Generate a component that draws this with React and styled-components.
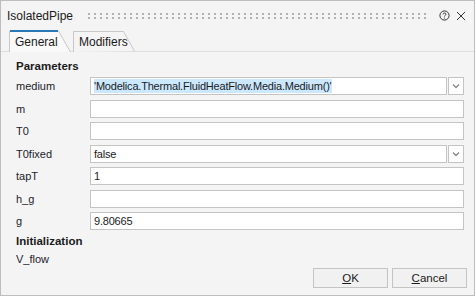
import React from 'react';
import styled, { createGlobalStyle } from 'styled-components';

const GlobalStyle = createGlobalStyle`
  html, body { margin: 0; padding: 0; background: #ffffff; }
  body { font-family: "Liberation Sans", Arial, sans-serif; font-size: 11px; color: #1b1b1b; }
`;

const Dialog = styled.div`
  box-sizing: border-box;
  width: 475px;
  height: 296px;
  border: 1px solid #bdbdbd;
  background: #f4f4f4;
  display: flex;
  flex-direction: column;
`;

const TitleBar = styled.div`
  height: 30px;
  display: flex;
  align-items: center;
  padding: 0 7px 0 6px;
  gap: 5px;
`;

const Title = styled.span`
  font-size: 12px;
  color: #1b1b1b;
`;

const Grip = styled.div`
  flex: 1;
  height: 6px;
  margin: 0 5px 0 10px;
  background-image: radial-gradient(circle, #b2b2b2 1px, transparent 1.3px);
  background-size: 6px 4px;
  background-position: -2px -1px;
`;

const IconBtn = styled.span`
  width: 12px;
  height: 12px;
  display: flex;
  align-items: center;
  justify-content: center;
`;

const TabBar = styled.div`
  display: flex;
  padding-left: 8px;
  height: 21px;
  border-bottom: 1px solid #dedede;
`;

const Tab = styled.div`
  position: relative;
  width: ${p => p.w}px;
  margin-right: 2px;
  padding-left: 6px;
  display: flex;
  align-items: center;
  font-size: 12px;
  color: #1b1b1b;
  padding-top: 2px;
  box-sizing: border-box;
  z-index: 0;
`;

const TabShape = styled.svg`
  position: absolute;
  left: 0;
  top: 0;
  z-index: -1;
`;

const Body = styled.div`
  flex: 1;
  display: flex;
  flex-direction: column;
  padding: 5px 10px 0 15px;
`;

const Heading = styled.div`
  font-weight: bold;
  font-size: 11.5px;
  height: 18px;
  display: flex;
  align-items: center;
  margin-top: ${p => p.mt || 0}px;
`;

const Grid = styled.div`
  display: grid;
  grid-template-columns: 74px 1fr;
  grid-auto-rows: 18px;
  row-gap: 4.5px;
  margin-top: 2px;
`;

const Label = styled.div`
  height: 18px;
  display: flex;
  align-items: center;
  color: #1c1c2c;
`;

const Field = styled.div`
  display: flex;
  height: 18px;
`;

const Input = styled.div`
  flex: 1;
  box-sizing: border-box;
  height: 18px;
  background: #ffffff;
  border: 1px solid #c4c4c4;
  display: flex;
  align-items: center;
  padding-left: 3px;
  white-space: nowrap;
  overflow: hidden;
  letter-spacing: -0.2px;
`;

const Selected = styled.span`
  background: #cce8ff;
  padding: 1px 0;
`;

const DropBtn = styled.div`
  width: 16px;
  box-sizing: border-box;
  height: 18px;
  margin-left: 1px;
  background: #ffffff;
  border: 1px solid #c4c4c4;
  display: flex;
  align-items: center;
  justify-content: center;
`;

const Footer = styled.div`
  display: flex;
  justify-content: flex-end;
  gap: 4px;
  padding: 0 7px 7px 0;
  margin-top: auto;
`;

const Button = styled.button`
  width: 75px;
  height: 20px;
  box-sizing: border-box;
  border: 1px solid #c4c4c4;
  background: #f1f1f1;
  font-family: inherit;
  font-size: 11.5px;
  color: #1b1b1b;
  padding: 0;
  u { text-decoration: underline; }
`;

const Chevron = () => (
  <svg width="8" height="6" viewBox="0 0 8 6">
    <path d="M1 1.5 L4 4.5 L7 1.5" fill="none" stroke="#8a8a8a" strokeWidth="1.4" />
  </svg>
);

const rows = [
  { label: 'medium', value: "'Modelica.Thermal.FluidHeatFlow.Media.Medium()'", select: true, selected: true },
  { label: 'm', value: '' },
  { label: 'T0', value: '' },
  { label: 'T0fixed', value: 'false', select: true },
  { label: 'tapT', value: '1' },
  { label: 'h_g', value: '' },
  { label: 'g', value: '9.80665' },
];

export default function App() {
  return (
    <>
      <GlobalStyle />
      <Dialog>
        <TitleBar>
          <Title>IsolatedPipe</Title>
          <Grip />
          <IconBtn>
            <svg width="11" height="11" viewBox="0 0 11 11">
              <circle cx="5.5" cy="5.5" r="4.6" fill="none" stroke="#333" strokeWidth="1" />
              <path d="M4 4.3 C4 2.6 7 2.6 7 4.2 C7 5.2 5.5 5.3 5.5 6.5" fill="none" stroke="#333" strokeWidth="1" />
              <circle cx="5.5" cy="8" r="0.6" fill="#333" />
            </svg>
          </IconBtn>
          <IconBtn>
            <svg width="10" height="10" viewBox="0 0 10 10">
              <path d="M1 1 L9 9 M9 1 L1 9" stroke="#333" strokeWidth="1" />
            </svg>
          </IconBtn>
        </TitleBar>
        <TabBar>
          <Tab w={62}>
            <TabShape width="62" height="22" viewBox="0 0 62 22">
              <path d="M0.5 22 V1 H49.5 L61.5 22" fill="#f9f9f9" stroke="#c8c8c8" />
              <path d="M1 1 H49" stroke="#2a78b6" strokeWidth="2" />
            </TabShape>
            General
          </Tab>
          <Tab w={62}>
            <TabShape width="62" height="22" viewBox="0 0 62 22">
              <path d="M0.5 22 V1.5 H50.5 L61.5 21" fill="#f4f4f4" stroke="#c8c8c8" />
            </TabShape>
            Modifiers
          </Tab>
        </TabBar>
        <Body>
          <Heading>Parameters</Heading>
          <Grid>
            {rows.map(r => (
              <React.Fragment key={r.label}>
                <Label>{r.label}</Label>
                <Field>
                  <Input>{r.selected ? <Selected>{r.value}</Selected> : r.value}</Input>
                  {r.select && <DropBtn><Chevron /></DropBtn>}
                </Field>
              </React.Fragment>
            ))}
          </Grid>
          <Heading mt={2}>Initialization</Heading>
          <Label>V_flow</Label>
        </Body>
        <Footer>
          <Button><u>O</u>K</Button>
          <Button><u>C</u>ancel</Button>
        </Footer>
      </Dialog>
    </>
  );
}
